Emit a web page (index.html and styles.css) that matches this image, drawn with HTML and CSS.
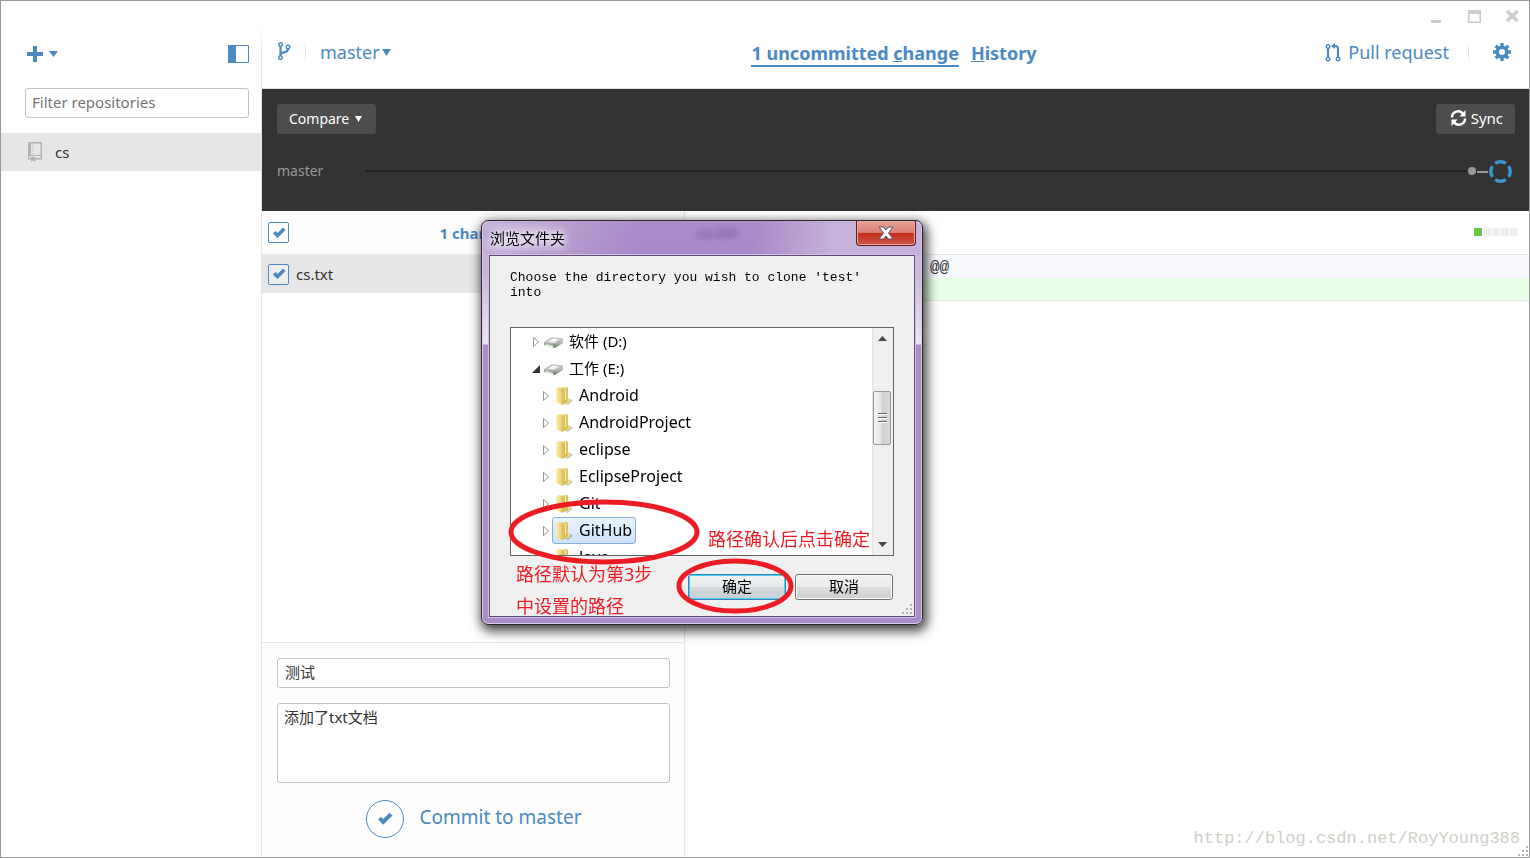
FILE: index.html
```html
<!DOCTYPE html>
<html lang="zh-CN">
<head>
<meta charset="utf-8">
<title>GitHub</title>
<link rel="stylesheet" href="styles.css">
</head>
<body>
<svg class="defs" aria-hidden="true">
  <defs>
    <linearGradient id="gold" x1="0" x2="1"><stop offset="0" stop-color="#fdf3b8"/><stop offset="1" stop-color="#e6cb6c"/></linearGradient>
    <linearGradient id="metal" x1="0" x2="0" y1="0" y2="1"><stop offset="0" stop-color="#e4e4e4"/><stop offset="1" stop-color="#7c7c7c"/></linearGradient>
    <symbol id="folder" viewBox="0 0 19 20">
      <path d="M10 18l6-5 2 2-5 4z" fill="#000" opacity=".2"/>
      <path d="M5 2l7-1 1 1v14l-6 2z" fill="#e0c25c"/>
      <path d="M7 3l4-1v13l-4 2z" fill="#f8eaa4"/>
      <path d="M1 2l4-1 2 2v16L1 16z" fill="url(#gold)"/>
      <path d="M7 3v16l6-3v-3l-3 1V3z" fill="#d3b145" opacity=".75"/>
      <path d="M13 12l2 1v3l-3 2z" fill="#edd67e"/>
    </symbol>
    <symbol id="drive" viewBox="0 0 20 14">
      <path d="M0 8l7-5 12 1v4l-8 5-11-3z" fill="url(#metal)"/>
      <path d="M0 7.500l8-5 11 1.500-8 5z" fill="#c9c9c9" stroke="#a5a5a5" stroke-width=".5"/>
      <path d="M4 6.500l5-3 6 1-5 3z" fill="#f7f7f7"/>
      <path d="M2 9l7 2v1.500l-7-2z" fill="#f0f0f0"/>
      <path d="M10 9.500v3l1.500-.5v-3z" fill="#4fae3c"/>
    </symbol>
    <symbol id="closed" viewBox="0 0 8 12"><path d="M1.500 1.500v9L6.500 6z" fill="#fff" stroke="#949494"/></symbol>
    <symbol id="open" viewBox="0 0 8 8"><path d="M8 0v8H0z" fill="#333"/></symbol>
    <symbol id="tick" viewBox="0 0 14 12"><path d="M1 6.500L3.500 4l2 2L11 .5 13.500 3l-8 8z" fill="#4a89c3"/></symbol>
  </defs>
</svg>

<div class="app">
  <aside class="sidebar">
    <div class="side-tools">
      <button class="icon-btn add" aria-label="Add repository">
        <svg width="16" height="16" viewBox="0 0 16 16"><path d="M6 0h4v6h6v4h-6v6H6v-6H0V6h6z" fill="#4a89c3"/></svg>
        <svg width="9" height="6" viewBox="0 0 9 6"><path d="M0 0h9L4.500 6z" fill="#4a89c3"/></svg>
      </button>
      <button class="icon-btn" aria-label="Toggle sidebar">
        <svg width="21" height="18" viewBox="0 0 21 18"><path d="M.5.5h20v17H.5z" fill="#fff" stroke="#4a89c3"/><path d="M0 0h8v18H0z" fill="#4a89c3"/></svg>
      </button>
    </div>
    <input class="field filter" type="text" placeholder="Filter repositories" aria-label="Filter repositories">
    <a class="repo" href="#">
      <svg width="16" height="20" viewBox="0 0 16 20"><path d="M1.700.7h12.600v16H1.700z" fill="none" stroke="#b3b3b3" stroke-width="1.400"/><path d="M1 1h3v13H1z" fill="#b3b3b3"/><path d="M1 13.500h14" stroke="#b3b3b3"/><path d="M6 3v1M6 5v1M6 7v1M6 9v1M6 11v1" stroke="#b3b3b3"/><path d="M4 15h4v5l-2-1.500L4 20z" fill="#b3b3b3"/></svg>
      <span>cs</span>
    </a>
  </aside>

  <main class="main">
    <header class="header">
      <div class="win-controls">
        <button class="icon-btn" aria-label="Minimize"><svg width="14" height="14" viewBox="0 0 14 14"><path d="M2 11h10v3H2z" fill="#ccc"/></svg></button>
        <button class="icon-btn" aria-label="Maximize"><svg width="14" height="14" viewBox="0 0 14 14"><path d="M1 1h13v13H1zM2.500 5v7.500h10V5z" fill="#ccc" fill-rule="evenodd"/></svg></button>
        <button class="icon-btn" aria-label="Close"><svg width="14" height="14" viewBox="0 0 14 14"><path d="M2 2l10.500 10M12.500 2L2 12" stroke="#ccc" stroke-width="3.200"/></svg></button>
      </div>
      <div class="toolbar">
        <div class="tool-group branch-group">
          <svg class="raised" width="14" height="18" viewBox="0 0 14 18" fill="none" stroke="#4a89c3"><circle cx="3.500" cy="2.500" r="1.800" stroke-width="1.400"/><circle cx="3.500" cy="15.500" r="1.800" stroke-width="1.400"/><circle cx="11" cy="5" r="1.800" stroke-width="1.400"/><path d="M3.500 4.500v9M11 7c0 5-7.500 2-7.500 6" stroke-width="2.200"/></svg>
          <span class="sep"></span>
          <button class="link-btn">master<svg width="9" height="7" viewBox="0 0 9 7"><path d="M0 0h9L4.500 7z" fill="#4a89c3"/></svg></button>
        </div>
        <nav class="tabs">
          <a class="tab active" href="#">1 uncommitted <u>c</u>hange</a>
          <a class="tab" href="#"><u>H</u>istory</a>
        </nav>
        <div class="tool-group end">
          <button class="link-btn pull"><svg width="16" height="19" viewBox="0 0 16 19" fill="none" stroke="#4a89c3"><circle cx="3" cy="3.500" r="1.800" stroke-width="1.400"/><circle cx="3" cy="16" r="1.800" stroke-width="1.400"/><circle cx="13" cy="16" r="1.800" stroke-width="1.400"/><path d="M3 5v9M13 14V6q0-3-3-3H8.500" stroke-width="2.200"/><path d="M10 0v6L6 3z" fill="#4a89c3" stroke="none"/></svg>Pull request</button>
          <span class="sep"></span>
          <button class="icon-btn" aria-label="Settings"><svg width="18" height="18" viewBox="-9 -9 18 18"><circle r="4.800" fill="none" stroke="#4a89c3" stroke-width="3.600"/><g stroke="#4a89c3" stroke-width="3.400"><path d="M0-6v-3M0 6v3M-6 0h-3M6 0h3M-4.300-4.300l-2-2M4.300 4.300l2 2M-4.300 4.300l-2 2M4.300-4.300l2-2"/></g></svg></button>
        </div>
      </div>
    </header>

    <section class="compare">
      <div class="compare-bar">
        <button class="dark-btn">Compare<svg width="7" height="6" viewBox="0 0 7 6"><path d="M0 0h7L3.500 6z" fill="#fff"/></svg></button>
        <button class="dark-btn sync"><svg width="17" height="16" viewBox="0 0 17 16"><path d="M2 7.500A6 6 0 0 1 13 4M15 8.500A6 6 0 0 1 4 12" fill="none" stroke="#fff" stroke-width="2.400"/><path d="M15.500 0v6.500H9.500zM1.500 16V9.500h6z" fill="#fff"/></svg>Sync</button>
      </div>
      <div class="timeline">
        <span class="branch">master</span>
        <span class="line"></span>
        <svg width="48" height="24" viewBox="0 0 48 24"><circle cx="5" cy="12" r="4" fill="#999"/><path d="M10 13h11" stroke="#999" stroke-width="2"/><circle cx="33.500" cy="12.500" r="9.700" fill="none" stroke="#3b97d3" stroke-width="3.400" pathLength="80" stroke-dasharray="15 5" stroke-dashoffset="-12.500"/></svg>
      </div>
    </section>

    <div class="work">
      <section class="changes">
        <div class="changes-head">
          <label class="check"><input type="checkbox" checked aria-label="Select all changes"><svg width="14" height="12"><use href="#tick"/></svg></label>
          <span class="count">1 change</span>
        </div>
        <div class="file">
          <label class="check"><input id="file" type="checkbox" checked aria-label="Include cs.txt"><svg width="14" height="12"><use href="#tick"/></svg></label>
          <label for="file">cs.txt</label>
        </div>
        <form class="commit">
          <input class="field" type="text" value="测试" aria-label="Summary">
          <textarea class="field" aria-label="Description">添加了txt文档</textarea>
          <button class="commit-btn" type="button"><span class="ring"><svg width="16" height="14" viewBox="0 0 14 12"><use href="#tick"/></svg></span><span class="commit-text">Commit to master</span></button>
        </form>
      </section>
      <section class="diff">
        <div class="diff-head"><b>cs.txt</b><span class="blocks"><i class="added"></i><i></i><i></i><i></i><i></i></span></div>
        <div class="hunk">@@</div>
        <div class="added-line"></div>
        <div class="watermark">http://blog.csdn.net/RoyYoung388</div>
      </section>
    </div>
  </main>
  <svg class="grip" width="10" height="10" viewBox="0 0 10 10" fill="#b5b5b5"><path d="M8 0h2v2H8zM4 4h2v2H4zM8 4h2v2H8zM0 8h2v2H0zM4 8h2v2H4zM8 8h2v2H8z"/></svg>
</div>

<div class="dialog" role="dialog" aria-labelledby="dlg-title">
  <div class="dlg-bar">
    <span id="dlg-title" class="dlg-title">浏览文件夹</span>
    <button class="dlg-close" aria-label="Close"><svg width="16" height="14" viewBox="0 0 16 14"><path d="M1 1h4.500L8 4l2.500-3H15l-4.500 6 4.500 6h-4.500L8 10l-2.500 3H1l4.500-6z" fill="#fff" stroke="#5a5064"/></svg></button>
  </div>
  <div class="dlg-body">
    <p class="prompt">Choose the directory you wish to clone 'test' into</p>
    <div class="tree">
      <ul class="tree-list">
        <li class="drive"><svg width="8" height="12"><use href="#closed"/></svg><svg width="20" height="14"><use href="#drive"/></svg><span>软件 (D:)</span></li>
        <li class="drive"><svg width="8" height="8"><use href="#open"/></svg><svg width="20" height="14"><use href="#drive"/></svg><span>工作 (E:)</span></li>
        <li><svg width="8" height="12"><use href="#closed"/></svg><span class="node"><svg width="19" height="20"><use href="#folder"/></svg>Android</span></li>
        <li><svg width="8" height="12"><use href="#closed"/></svg><span class="node"><svg width="19" height="20"><use href="#folder"/></svg>AndroidProject</span></li>
        <li><svg width="8" height="12"><use href="#closed"/></svg><span class="node"><svg width="19" height="20"><use href="#folder"/></svg>eclipse</span></li>
        <li><svg width="8" height="12"><use href="#closed"/></svg><span class="node"><svg width="19" height="20"><use href="#folder"/></svg>EclipseProject</span></li>
        <li><svg width="8" height="12"><use href="#closed"/></svg><span class="node"><svg width="19" height="20"><use href="#folder"/></svg>Git</span></li>
        <li><svg width="8" height="12"><use href="#closed"/></svg><span class="node selected"><svg width="19" height="20"><use href="#folder"/></svg>GitHub</span></li>
        <li><svg width="8" height="12"><use href="#closed"/></svg><span class="node"><svg width="19" height="20"><use href="#folder"/></svg>Java</span></li>
      </ul>
      <div class="scroll">
        <svg width="9" height="5" viewBox="0 0 9 5"><path d="M4.500 0L9 5H0z" fill="#444"/></svg>
        <span class="thumb"><i></i><i></i><i></i></span>
        <svg class="down" width="9" height="5" viewBox="0 0 9 5"><path d="M0 0h9L4.500 5z" fill="#444"/></svg>
      </div>
    </div>
    <div class="dlg-actions">
      <button class="win-btn primary">确定</button>
      <button class="win-btn">取消</button>
    </div>
  </div>
  <svg class="grip dlg-grip" width="10" height="10" viewBox="0 0 10 10" fill="#b0b0b0"><path d="M8 0h2v2H8zM4 4h2v2H4zM8 4h2v2H8zM0 8h2v2H0zM4 8h2v2H4zM8 8h2v2H8z"/></svg>
  <svg class="marks" width="300" height="120" viewBox="0 0 300 120" fill="none" stroke="#ed1c24" stroke-width="5"><ellipse cx="104" cy="37" rx="93" ry="30"/><ellipse cx="235" cy="91" rx="56" ry="25"/></svg>
  <p class="note note-ok">路径确认后点击确定</p>
  <p class="note note-path">路径默认为第3步<br>中设置的路径</p>
</div>
</body>
</html>
```
FILE: styles.css
```css
* { box-sizing: border-box; }
html, body { height: 100%; }
body {
  margin: 0;
  position: relative;
  font: 15px/20px "Noto Sans", "Noto Sans CJK SC", sans-serif;
  color: #333;
  background: #fff;
  overflow: hidden;
}
button, input, textarea { font: inherit; color: inherit; }
button { border: 0; padding: 0; background: none; display: flex; align-items: center; }
svg { display: block; flex: none; }
a { color: inherit; text-decoration: none; }
p, ul { margin: 0; padding: 0; }
.defs { position: absolute; width: 0; height: 0; }

.app { position: relative; display: flex; height: 100%; border: 1px solid #999; }
.sidebar { width: 261px; flex: none; border-right: 1px solid #e5e5e5; border-image: linear-gradient(#fff 26px, #e5e5e5 50px) 1; }
.side-tools { display: flex; justify-content: space-between; align-items: center; padding: 18px 12px 0 26px; height: 87px; }
.add { gap: 6px; }
.field { display: block; width: 100%; border: 1px solid #c3c3c3; border-radius: 3px; background: #fff; padding: 4px 7px; outline: 0; }
.field::placeholder { color: #757575; opacity: 1; }
.filter { width: 224px; height: 30px; margin: 0 0 15px 24px; padding: 0 6px 2px; }
.repo { display: flex; align-items: center; gap: 12px; height: 38px; padding-left: 26px; background: #e6e6e6; }

.main { flex: 1; min-width: 0; display: flex; flex-direction: column; }
.header { height: 88px; flex: none; border-bottom: 1px solid #e0e0e0; color: #4a89c3; font-size: 18px; line-height: 24px; }
.win-controls { display: flex; justify-content: flex-end; gap: 24px; height: 26px; padding: 8px 10px 0 0; align-items: flex-start; }
.toolbar { display: grid; grid-template-columns: 1fr auto 1fr; height: 50px; align-items: center; padding: 0 18px 0 15px; }
.tool-group { display: flex; align-items: center; gap: 15px; }
.branch-group { gap: 14px; }
.raised { margin-bottom: 2px; }
.end { justify-content: flex-end; gap: 24px; }
.end .sep { margin-left: -5px; }
.sep { width: 1px; height: 24px; background: linear-gradient(#fff, #ddd, #fff); }
.link-btn { gap: 2px; color: #4a89c3; }
.pull { gap: 7px; }
.tabs { display: flex; gap: 12px; font-weight: 700; }
.tab { border-bottom: 2px solid transparent; padding-top: 4px; }
.tab.active { border-color: #4a89c3; }
.tab u { text-decoration-thickness: 1px; }

.compare { flex: none; height: 122px; background: #333; color: #fff; padding: 15px 14px 15px 15px; font-size: 14px; }
.compare-bar { display: flex; justify-content: space-between; }
.dark-btn { height: 30px; padding: 0 14px 0 12px; gap: 6px; border-radius: 3px; background: #4d4d4d; color: #fff; }
.sync { padding: 0 12px 2px 14px; gap: 4px; font-size: 15px; }
.timeline { display: flex; align-items: center; height: 24px; margin-top: 25px; color: #999; }
.branch { width: 88px; }
.line { flex: 1; height: 2px; background: #222; }

.work { flex: 1; min-height: 0; display: flex; }
.changes { width: 423px; flex: none; display: flex; flex-direction: column; border-right: 1px solid #e5e5e5; }
.changes-head { display: flex; align-items: center; height: 44px; padding-left: 6px; border-bottom: 1px solid #ececec; background: #fdfdfd; }
.count { flex: 1; text-align: center; color: #4a89c3; font-weight: 700; padding-right: 27px; }
.file { display: flex; align-items: center; gap: 7px; height: 38px; padding-left: 6px; background: #e6e6e6; }
.check { display: grid; place-items: center; width: 21px; height: 21px; }
.check > * { grid-area: 1 / 1; }
.check input { appearance: none; width: 21px; height: 21px; margin: 0; border: 1px solid #4a89c3; border-radius: 2px; background: #fff; }
.file .check input { background: #eee; }
.check svg { z-index: 1; pointer-events: none; }
.commit { margin-top: auto; padding: 15px 14px 19px 15px; border-top: 1px solid #e5e5e5; background: #fdfdfd; }
.commit .field { height: 30px; padding: 0 7px 4px; margin-bottom: 15px; }
.commit textarea.field { height: 80px; padding: 3px 6px; resize: none; margin-bottom: 17px; }
.commit-btn { gap: 16px; margin: 0 auto; color: #4a89c3; font-size: 19px; line-height: 24px; }
.commit-text { padding-bottom: 4px; }
.ring { display: grid; place-items: center; width: 38px; height: 38px; border: 1px solid #4a89c3; border-radius: 50%; }

.diff { flex: 1; min-width: 0; display: flex; flex-direction: column; }
.diff-head { display: flex; justify-content: space-between; align-items: center; height: 44px; padding: 0 11px 2px 12px; border-bottom: 1px solid #e5e5e5; }
.blocks { display: flex; gap: 1px; }
.blocks i { width: 8px; height: 8px; background: #eee; }
.blocks .added { background: #6cc644; }
.hunk { height: 23px; padding-left: 245px; line-height: 26px; background: #f8f8ff; font-family: "Liberation Mono", monospace; font-size: 16px; }
.added-line { height: 23px; background: #e6ffe6; border-bottom: 1px solid #dfe8df; }
.watermark { margin: auto 9px 8px auto; color: #d0d0c8; font: 17px/20px "Liberation Mono", monospace; }
.grip { position: absolute; right: 1px; bottom: 1px; }

.dialog {
  position: absolute; left: 481px; top: 220px; width: 442px; height: 405px;
  display: flex; flex-direction: column; padding: 0 7px 7px;
  border: 1px solid #2c2433; border-radius: 7px;
  background: linear-gradient(rgba(150, 115, 185, .45), rgba(190, 165, 212, .8) 50px, rgba(235, 225, 243, .95) 123px, #aa8cc6 124px);
  backdrop-filter: blur(3px);
  box-shadow: inset 0 0 0 1px #d9c9e8, 2px 4px 12px 2px rgba(0, 0, 0, .75);
  color: #000;
}
.dlg-bar { display: flex; justify-content: space-between; height: 34px; margin: 0 -6px; padding: 0 5px 0 7px; border-radius: 6px 6px 0 0; background: linear-gradient(100deg, rgba(193, 170, 214, .55), rgba(140, 95, 180, .55) 35%, rgba(140, 95, 180, .55) 62%, rgba(193, 170, 214, .55) 80%); }
.dlg-title { padding-top: 7px; text-shadow: 0 0 8px #fff, 0 0 8px #fff, 0 0 12px #fff; }
.dlg-close { width: 60px; height: 25px; justify-content: center; border: 1px solid #5e1d1d; border-top: 0; border-radius: 0 0 4px 4px; box-shadow: inset 0 0 0 1px #eea79b; background: linear-gradient(#e8a195, #d97e71 50%, #c22f1c 51%, #cf5545); }
.dlg-body { flex: 1; border: 1px solid #5d4a72; box-shadow: 0 0 0 1px #d5c5e4; background: #f0f0f0; padding: 14px 20px 0; }
.prompt { height: 57px; font: 13px/15px "Liberation Mono", monospace; }
.tree { display: flex; height: 229px; border: 1px solid #646464; background: #fff; overflow: hidden; }
.tree-list { flex: 1; list-style: none; line-height: 27px; font-size: 16px; }
.tree-list li { display: flex; align-items: center; height: 27px; padding-left: 31px; gap: 2px; }
.tree-list .drive { padding-left: 21px; gap: 5px; font-size: 15px; }
.drive svg + svg { margin-left: -1px; }
.node { display: flex; align-items: center; gap: 5px; height: 27px; padding: 0 3px 0 2px; border: 1px solid transparent; border-radius: 3px; line-height: 25px; }
.node.selected { border-color: #84acdd; background: linear-gradient(#eaf3fe, #cfe3fd); }
.scroll { width: 21px; display: flex; flex-direction: column; align-items: center; padding: 8px 2px 8px 0; background: #f0f0f0; border-left: 1px solid #e3e3e3; }
.thumb { display: flex; flex-direction: column; justify-content: center; align-items: center; gap: 2px; width: 18px; height: 54px; margin-top: 50px; border: 1px solid #979797; border-radius: 2px; background: linear-gradient(90deg, #f5f5f5, #e4e4e6 45%, #cfd0d2 50%, #d9dadc); }
.thumb i { width: 9px; height: 2px; background: #666; border-bottom: 1px solid #fff; }
.down { margin-top: auto; }
.dlg-actions { display: flex; justify-content: flex-end; gap: 9px; margin: 18px 1px 0 0; }
.win-btn { width: 98px; height: 26px; padding-bottom: 2px; justify-content: center; border: 1px solid #707070; border-radius: 3px; box-shadow: inset 0 0 0 1px #fcfcfc; background: linear-gradient(#f2f2f2, #ebebeb 50%, #ddd 51%, #cfcfcf); font-size: 15px; }
.win-btn.primary { border-color: #3c7fb1; box-shadow: inset 0 0 0 1px #48d0f5; background: linear-gradient(#f0f2f3, #e6eaec 50%, #d3dade 51%, #c6cfd4); }
.dlg-grip { right: 10px; bottom: 10px; }
.marks { position: absolute; left: 18px; top: 274px; }
.note { position: absolute; color: #ed1c24; font-size: 18px; line-height: 32px; white-space: nowrap; }
.note-ok { left: 226px; top: 302px; }
.note-path { left: 34px; top: 337px; }
```
